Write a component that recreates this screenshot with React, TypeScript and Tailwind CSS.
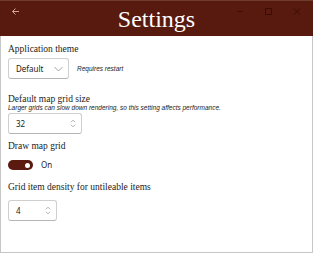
import type { ReactNode } from "react";

const serif = "font-['Liberation_Serif',serif]";
const sans = "font-['Noto_Sans','Liberation_Sans',sans-serif]";

export default function App() {
  return (
    <div className="flex h-[253px] w-[313px] flex-col bg-white text-[#1b1b1b]">
      <TitleBar />
      <div className="flex flex-1 flex-col border-x border-b border-[#c6c6c6] pl-[7px]">
        <Label className="mt-[8px]">Application theme</Label>
        <div className="mt-[4px] flex items-center gap-[8px]">
          <div className="flex h-[21px] w-[61px] items-center justify-between rounded-[3px] border border-[#cfcfcf] border-b-[#b5b5b5] pl-[7px] pr-[5px]">
            <span className={`${sans} text-[8px]`}>Default</span>
            <Chevron />
          </div>
          <Note>Requires restart</Note>
        </div>

        <Label className="mt-[15px]">Default map grid size</Label>
        <Note className="mt-0">
          Larger grids can slow down rendering, so this setting affects performance.
        </Note>
        <NumberBox value="32" width="w-[74px]" className="mt-[1px]" />

        <Label className="mt-[7px]">Draw map grid</Label>
        <div className="mt-[9px] flex items-center gap-[8px]">
          <div className="flex h-[10px] w-[25px] items-center justify-end rounded-full bg-[#5a1a10] pr-[3px]">
            <div className="h-[5px] w-[5px] rounded-full bg-white" />
          </div>
          <span className={`${sans} text-[8px] leading-[10px]`}>On</span>
        </div>

        <Label className="mt-[12px]">Grid item density for untileable items</Label>
        <NumberBox value="4" width="w-[49px]" className="mt-[8px]" />
      </div>
    </div>
  );
}

function TitleBar() {
  return (
    <div className="relative flex h-[36px] items-center justify-center border-t border-[#6d3b30] bg-[#581a0f]">
      <svg className="absolute left-[11px] top-[6px]" width="9" height="9" viewBox="0 0 9 9" fill="none">
        <path d="M8 4.5H1.5M4.5 1.5L1.5 4.5L4.5 7.5" stroke="#d3a59b" strokeWidth="1" />
      </svg>
      <span className={`${serif} text-[24px] leading-[28px] text-white`}>Settings</span>
      <svg className="absolute left-[236px] top-[6px]" width="70" height="9" viewBox="0 0 70 9" fill="none">
        <path d="M1 4.5H7" stroke="#3a0d07" strokeWidth="1" />
        <rect x="29.5" y="1.5" width="6" height="6" stroke="#3a0d07" strokeWidth="1" />
        <path d="M58 1.5L64 7.5M64 1.5L58 7.5" stroke="#3a0d07" strokeWidth="1" />
      </svg>
    </div>
  );
}

function Label({ children, className = "" }: { children: ReactNode; className?: string }) {
  return <p className={`${serif} text-[9.5px] leading-[10px] ${className}`}>{children}</p>;
}

function Note({ children, className = "" }: { children: ReactNode; className?: string }) {
  return (
    <p className={`font-['Liberation_Sans',sans-serif] text-[6.5px] italic leading-[8px] ${className}`}>
      {children}
    </p>
  );
}

function NumberBox({ value, width, className = "" }: { value: string; width: string; className?: string }) {
  return (
    <div
      className={`flex h-[21px] ${width} items-center justify-between rounded-[3px] border border-[#cfcfcf] border-b-[#b5b5b5] pl-[7px] pr-[5px] ${className}`}
    >
      <span className={`${sans} text-[8px]`}>{value}</span>
      <svg width="6" height="9" viewBox="0 0 6 9" fill="none">
        <path d="M1 3.2L3 1.2L5 3.2M1 5.8L3 7.8L5 5.8" stroke="#9a9a9a" strokeWidth="0.8" />
      </svg>
    </div>
  );
}

function Chevron() {
  return (
    <svg width="9" height="6" viewBox="0 0 9 6" fill="none">
      <path d="M0.5 1L4.5 5L8.5 1" stroke="#8a8a8a" strokeWidth="0.8" />
    </svg>
  );
}
